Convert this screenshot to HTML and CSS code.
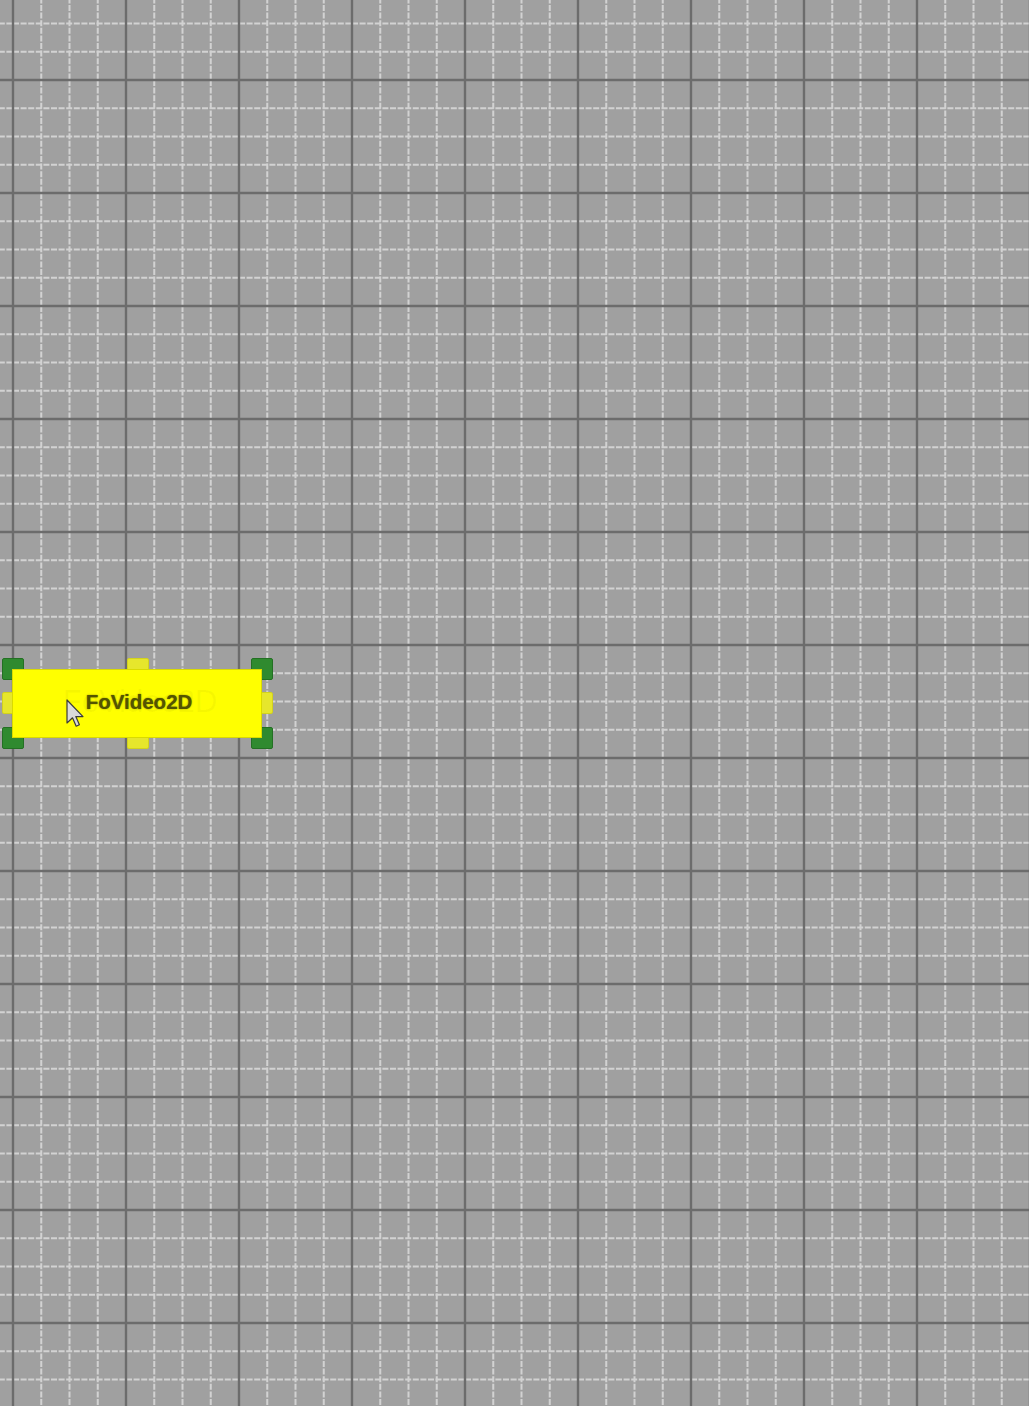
FILE: index.html
```html
<!DOCTYPE html>
<html>
<head>
<meta charset="utf-8">
<link rel="stylesheet" href="styles.css">
</head>
<body>
<div class="canvas">
  <svg class="grid" width="1029" height="1406" viewBox="0 0 1029 1406">
    <defs>
      <pattern id="g" x="13" y="80" width="113" height="113" patternUnits="userSpaceOnUse">
        <g class="minor">
          <line x1="28.25" y1="0" x2="28.25" y2="113"/>
          <line x1="56.5" y1="0" x2="56.5" y2="113"/>
          <line x1="84.75" y1="0" x2="84.75" y2="113"/>
          <line x1="0" y1="28.25" x2="113" y2="28.25"/>
          <line x1="0" y1="56.5" x2="113" y2="56.5"/>
          <line x1="0" y1="84.75" x2="113" y2="84.75"/>
        </g>
        <g class="major">
          <line x1="0" y1="0" x2="0" y2="113"/>
          <line x1="113" y1="0" x2="113" y2="113"/>
          <line x1="0" y1="0" x2="113" y2="0"/>
          <line x1="0" y1="113" x2="113" y2="113"/>
        </g>
      </pattern>
    </defs>
    <rect width="1029" height="1406" fill="url(#g)"/>
  </svg>

  <div class="node">
    <span class="handle corner tl"></span>
    <span class="handle corner tr"></span>
    <span class="handle corner bl"></span>
    <span class="handle corner br"></span>
    <span class="handle mid tm"></span>
    <span class="handle mid bm"></span>
    <span class="handle mid lm"></span>
    <span class="handle mid rm"></span>
    <div class="body">
      <span class="ghost">FoVideo2D</span>
      <span class="label">FoVideo2D</span>
    </div>
  </div>

  <svg class="cursor" width="20" height="29" viewBox="0 0 20 29">
    <path d="M1 1 L1 24 L6.5 18.8 L10.2 27.2 L13.4 25.8 L9.8 17.6 L17 17.6 Z" fill="#dadada" stroke="#3a3a3a" stroke-width="1.2" stroke-linejoin="round"/>
  </svg>
</div>
</body>
</html>
```

FILE: styles.css
```css
html, body {
  margin: 0;
  padding: 0;
  background: #a0a0a0;
  width: 1029px;
  height: 1406px;
  overflow: hidden;
  font-family: "Liberation Sans", Arial, sans-serif;
}

.canvas {
  position: relative;
  width: 1029px;
  height: 1406px;
  background: #a0a0a0;
}

.grid {
  position: absolute;
  left: 0;
  top: 0;
  display: block;
}

.grid .minor line {
  stroke: #d2d2d2;
  stroke-width: 2;
  stroke-dasharray: 6 1.6;
}

.grid .major line {
  stroke: #6c6c6c;
  stroke-width: 2.4;
}

.node {
  position: absolute;
  left: 13px;
  top: 669px;
  width: 249px;
  height: 69px;
}

.handle {
  position: absolute;
  width: 22px;
  height: 22px;
  box-sizing: border-box;
  border-radius: 2px;
}

.handle.corner {
  background: #2f8a2f;
  border: 1px solid #237023;
}

.handle.mid {
  background: #e6e62c;
  border: 1px solid #d2d21c;
}

.tl { left: -11px; top: -11px; }
.tr { right: -11px; top: -11px; }
.bl { left: -11px; bottom: -11px; }
.br { right: -11px; bottom: -11px; }
.tm { left: 114px; top: -11px; }
.bm { left: 114px; bottom: -11px; }
.lm { left: -11px; top: 23px; }
.rm { right: -11px; top: 23px; }

.body {
  position: absolute;
  left: -1px;
  top: 0;
  right: 0;
  bottom: 0;
  background: #ffff00;
  border: 1px solid #dada00;
  box-sizing: border-box;
  display: flex;
  align-items: center;
  justify-content: center;
}

.label {
  position: relative;
  font-size: 20.5px;
  font-weight: bold;
  color: #545400;
  text-shadow: 0 0 1.5px rgba(80, 80, 0, 0.8);
  left: 2px;
  top: -2px;
}

.ghost {
  position: absolute;
  left: 0;
  right: 0;
  top: 0;
  bottom: 0;
  display: flex;
  align-items: center;
  justify-content: center;
  font-size: 31px;
  color: rgba(120, 120, 0, 0.06);
  margin-top: -4px;
  padding-left: 6px;
}

.cursor {
  position: absolute;
  left: 66px;
  top: 699px;
}
```
